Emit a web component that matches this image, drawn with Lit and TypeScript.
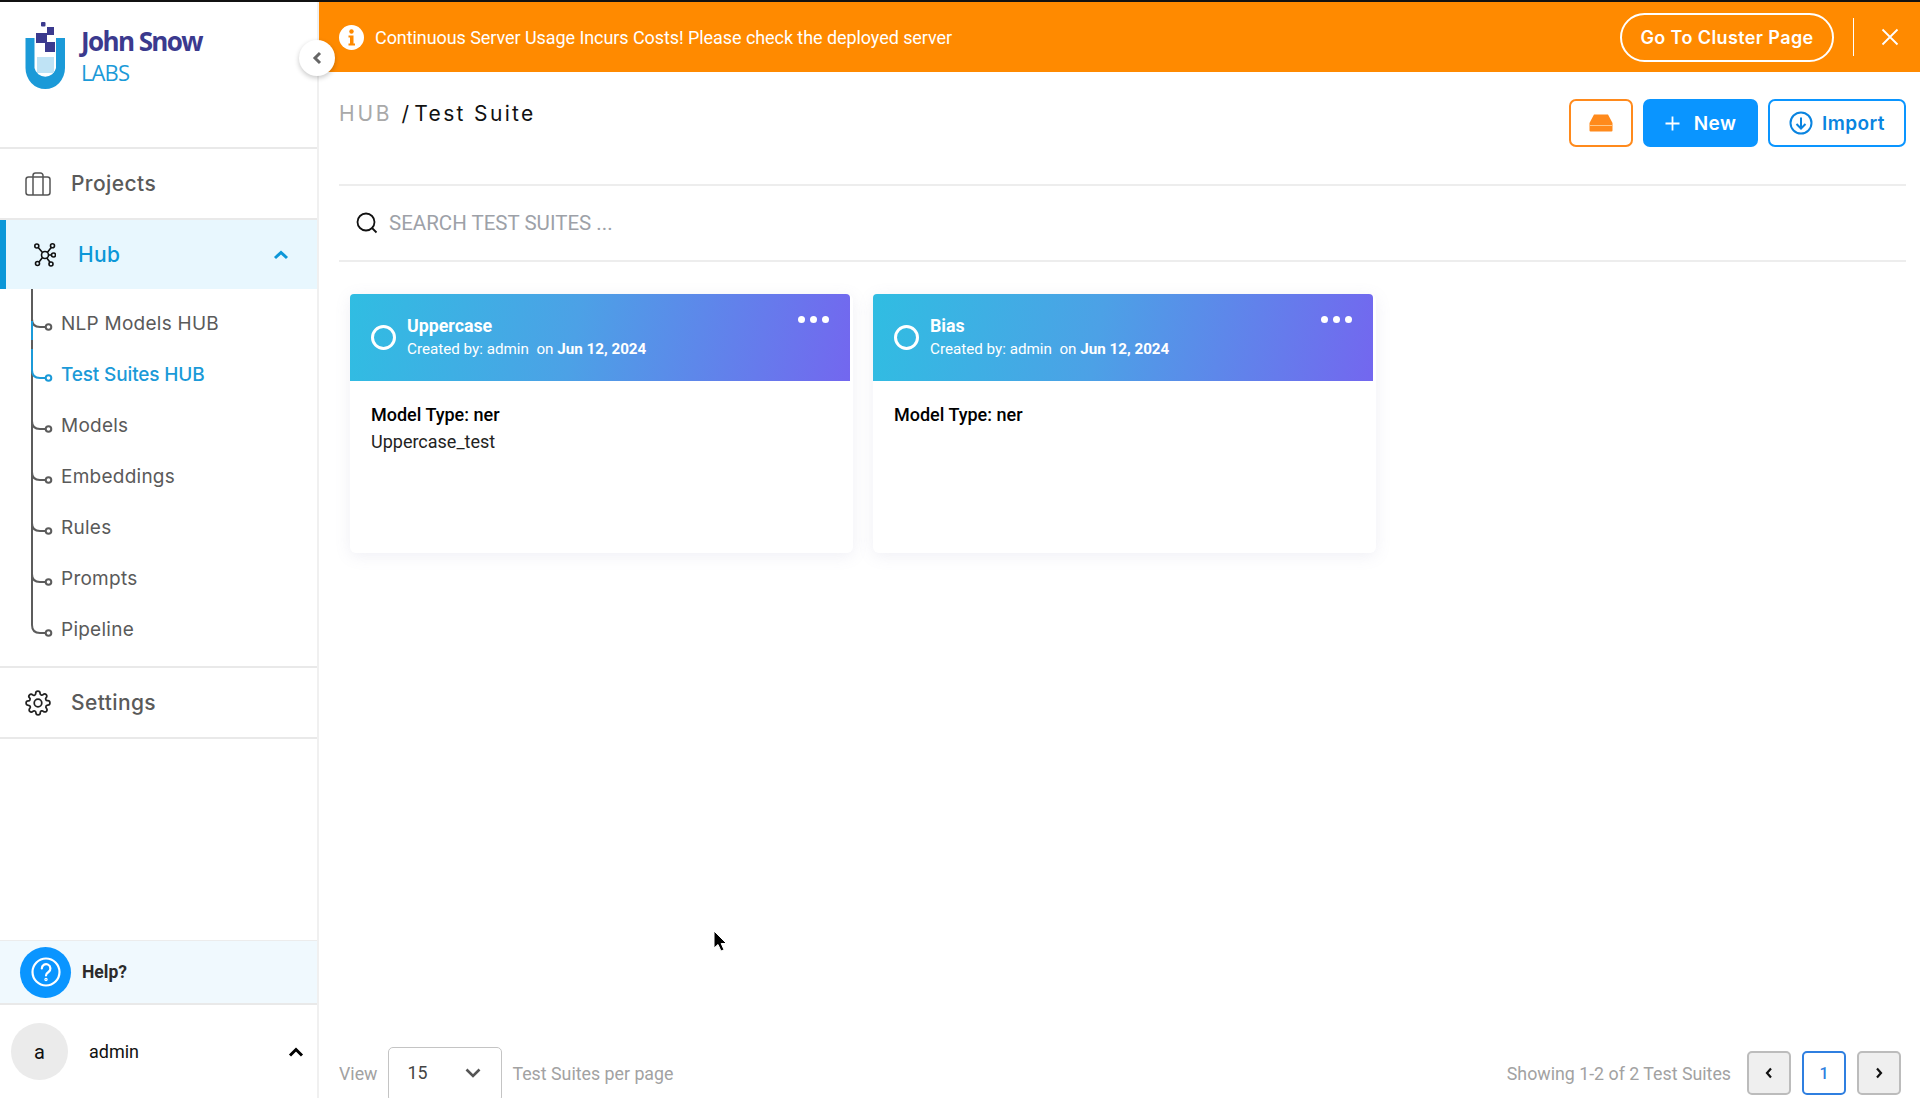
import { LitElement, html, css, svg } from 'lit';
import { customElement } from 'lit/decorators.js';

const SUB_ITEMS = ['NLP Models HUB', 'Test Suites HUB', 'Models', 'Embeddings', 'Rules', 'Prompts', 'Pipeline'];
const ACTIVE_SUB = 1;

const CARDS = [
  { title: 'Uppercase', note: 'Uppercase_test' },
  { title: 'Bias', note: '' },
];

// One row of the tree beside the submenu: trunk, curved branch and end dot.
function treeRow(index: number) {
  const last = index === SUB_ITEMS.length - 1;
  const active = index === ACTIVE_SUB;
  const grey = '#5c5c5c';
  const blue = '#1b9ad8';
  const stroke = active ? blue : grey;
  return html`<svg class="tree" width="61" height="51" viewBox="0 0 61 51" fill="none">
    ${last
      ? svg`<path d="M32 0V21Q32 29 40 29H45" stroke=${grey} stroke-width="2"/>`
      : svg`<path d="M32 -9V51" stroke=${grey} stroke-width="2"/>
            <path d="M32 21Q32 29 40 29H45" stroke=${stroke} stroke-width="2"/>`}
    ${index === ACTIVE_SUB - 1 ? svg`<path d="M32 23V51" stroke=${blue} stroke-width="2"/>` : ''}
    ${active ? svg`<path d="M32 0V21" stroke=${blue} stroke-width="2"/>` : ''}
    <circle cx="48.5" cy="29" r="2.8" stroke=${stroke} stroke-width="2"/>
  </svg>`;
}

@customElement('app-root')
export class AppRoot extends LitElement {
  static styles = css`
    :host {
      display: block;
      height: 1098px;
      overflow: hidden;
      font-family: Roboto, sans-serif;
      background: #fff;
    }
    .page {
      position: relative;
      display: flex;
      height: 1096px;
      border-top: 2px solid #111;
    }

    /* sidebar */
    .side {
      position: relative;
      flex: none;
      display: flex;
      flex-direction: column;
      width: 317px;
      border-right: 2px solid #f0f0f0;
      font-family: Inter, sans-serif;
    }
    .logo {
      display: flex;
      height: 145px;
      border-bottom: 2px solid #e9e9e9;
    }
    .logo svg { flex: none; }
    .logo-text { padding: 22px 0 0 15px; font-family: 'Open Sans', sans-serif; }
    .logo-name {
      font-size: 26px;
      line-height: 34px;
      font-weight: 700;
      letter-spacing: -1.6px;
      color: #3b3a8e;
    }
    .logo-labs {
      font-size: 22px;
      line-height: 28px;
      font-weight: 400;
      letter-spacing: -0.9px;
      color: #1b9ad8;
    }
    .toggle {
      position: absolute;
      top: 38px;
      left: 299px;
      z-index: 2;
      display: flex;
      align-items: center;
      justify-content: center;
      width: 36px;
      height: 36px;
      border-radius: 50%;
      background: #fff;
      box-shadow: 0 2px 5px rgba(0, 0, 0, 0.22);
    }
    .nav {
      display: flex;
      align-items: center;
      height: 69px;
      border-bottom: 2px solid #e9e9e9;
      font-size: 21px;
      font-weight: 500;
      letter-spacing: 0.4px;
      color: #5a5a5a;
    }
    .nav svg { flex: none; margin-left: 25px; }
    .nav span { margin-left: 20px; }
    .nav.hub {
      height: 69px;
      border-bottom: 0;
      border-left: 6px solid #0c97d8;
      background: #e8f7fe;
      color: #0c97d8;
    }
    .nav.hub svg.net { margin-left: 28px; }
    .nav.hub span { margin-left: 22px; }
    .nav.hub svg.chev { margin-left: auto; margin-right: 28px; }
    .sub { display: flex; flex-direction: column; padding: 9px 0 11px; border-bottom: 2px solid #e9e9e9; }
    .sub-item {
      display: flex;
      align-items: center;
      height: 51px;
      font-size: 19px;
      font-weight: 400;
      letter-spacing: 0.25px;
      color: #5a5a5a;
    }
    .sub-item.on { color: #1b9ad8; font-weight: 500; letter-spacing: -0.15px; }
    .tree { flex: none; overflow: visible; }
    .help {
      display: flex;
      align-items: center;
      height: 62px;
      margin-top: auto;
      border-top: 1px solid #ececec;
      border-bottom: 2px solid #e9e9e9;
      background: #f0f9fe;
      font-family: Roboto, sans-serif;
      font-size: 17.5px;
      font-weight: 700;
      color: #2b2b2b;
    }
    .help-icon {
      display: flex;
      align-items: center;
      justify-content: center;
      width: 51px;
      height: 51px;
      margin: 0 11px 0 20px;
      border-radius: 50%;
      background: #0a95ff;
    }
    .user {
      display: flex;
      align-items: center;
      height: 93px;
      padding: 0 13px 0 11px;
      font-family: Roboto, sans-serif;
      font-size: 18px;
      color: #111;
    }
    .avatar {
      display: flex;
      align-items: center;
      justify-content: center;
      width: 57px;
      height: 57px;
      margin-right: 21px;
      border-radius: 50%;
      background: #ebebeb;
      font-size: 20px;
    }
    .user svg { margin-left: auto; }

    /* main column */
    .main { flex: 1; min-width: 0; display: flex; flex-direction: column; }
    .banner {
      flex: none;
      display: flex;
      align-items: center;
      height: 70px;
      padding: 0 21px 0 20px;
      background: #ff8a00;
      color: #fff;
      font-size: 18px;
      letter-spacing: -0.07px;
    }
    .banner-text { margin-left: 11px; }
    .cluster {
      display: flex;
      align-items: center;
      justify-content: center;
      width: 214px;
      height: 49px;
      margin-left: auto;
      box-sizing: border-box;
      border: 2px solid #fff;
      border-radius: 25px;
      font-family: Inter, sans-serif;
      font-size: 18px;
      font-weight: 600;
      letter-spacing: 0.4px;
    }
    .divider { width: 1px; height: 38px; margin: 0 27px 0 19px; background: #fff; }
    .content { flex: 1; min-height: 0; display: flex; flex-direction: column; padding: 0 14px 0 20px; }
    .top {
      flex: none;
      display: flex;
      justify-content: space-between;
      height: 114px;
      border-bottom: 2px solid #ededed;
      box-sizing: border-box;
    }
    .crumb {
      padding-top: 28px;
      font-family: Inter, sans-serif;
      font-size: 21px;
      line-height: 28px;
      letter-spacing: 2.35px;
      color: #111;
    }
    .crumb b { font-weight: 400; color: #a9a9a9; margin-right: 9px; letter-spacing: 2.8px; }
    .crumb span { margin-left: 3px; }
    .actions { display: flex; gap: 10px; padding-top: 27px; }
    .btn {
      display: flex;
      align-items: center;
      justify-content: center;
      height: 48px;
      box-sizing: border-box;
      border: 2px solid #0a95ff;
      border-radius: 7px;
      font-family: Inter, sans-serif;
      font-size: 19px;
      font-weight: 600;
      letter-spacing: 0.4px;
      color: #0a84e0;
    }
    .btn.box { width: 64px; border-color: #ff8a1c; }
    .btn.new { width: 115px; gap: 14px; background: #0a95ff; color: #fff; }
    .btn.import { width: 138px; gap: 9px; }
    .search {
      flex: none;
      display: flex;
      align-items: center;
      gap: 11px;
      height: 76px;
      padding-left: 17px;
      border-bottom: 2px solid #ededed;
      box-sizing: border-box;
      font-size: 20.5px;
      color: #9da1a8;
    }
    .cards { flex: 1; min-height: 0; display: flex; gap: 20px; padding: 32px 0 0 11px; }
    .card {
      width: 503px;
      height: 259px;
      padding-right: 3px;
      box-sizing: border-box;
      border-radius: 6px;
      background: #fff;
      box-shadow: 0 3px 16px rgba(120, 125, 170, 0.12);
    }
    .card-head {
      position: relative;
      display: flex;
      align-items: center;
      height: 87px;
      border-radius: 4px 4px 0 0;
      background: linear-gradient(100deg, #30bde2, #4ca1e6 45%, #7367ef);
      color: #fff;
    }
    .radio {
      flex: none;
      width: 25px;
      height: 25px;
      margin: 0 11px 0 21px;
      box-sizing: border-box;
      border: 3px solid #fff;
      border-radius: 50%;
    }
    .card-text { padding-top: 1px; }
    .card-title { font-size: 17.8px; line-height: 22px; font-weight: 700; }
    .card-meta { font-size: 15.2px; line-height: 24px; white-space: pre; }
    .card-meta b { font-weight: 700; }
    .dots { position: absolute; top: 22px; right: 21px; display: flex; gap: 5px; }
    .dots i { width: 7px; height: 7px; border-radius: 50%; background: #fff; }
    .card-body { padding: 20px 0 0 21px; font-size: 18px; line-height: 27px; color: #222; }
    .card-body b { display: block; font-weight: 500; color: #000; }
    .pager {
      flex: none;
      display: flex;
      align-items: center;
      height: 50px;
      padding-top: 1px;
      font-size: 17.8px;
      color: #a2a2a2;
      overflow: hidden;
    }
    .select {
      display: flex;
      align-items: center;
      justify-content: space-between;
      align-self: flex-start;
      width: 114px;
      height: 55px;
      margin: -1px 10px 0 11px;
      padding: 0 20px 4px 18px;
      box-sizing: border-box;
      border: 1px solid #c4c4c4;
      border-radius: 5px;
      color: #444;
    }
    .showing { margin-left: auto; margin-right: 16px; }
    .page-btn {
      display: flex;
      align-items: center;
      justify-content: center;
      width: 44px;
      height: 44px;
      margin-left: 11px;
      box-sizing: border-box;
      border: 2px solid #bcbcbc;
      border-radius: 5px;
      background: #efefef;
      color: #111;
    }
    .page-btn.first { margin-left: 0; }
    .page-btn.on {
      border-color: #2f7fe0;
      background: #fff;
      color: #2f7fe0;
      font-size: 16px;
      font-weight: 500;
    }
    .page-btn.last { margin-right: 5px; }
    .cursor { position: absolute; left: 713px; top: 928px; z-index: 5; }
  `;

  render() {
    return html`
      <div class="page">
        <aside class="side">
          <div class="logo">
            <svg width="66" height="96" viewBox="0 0 66 96">
              <path d="M25.5 36H34.5V66A11 11 0 0 0 56 66V36H65V66A19.7 21 0 0 1 25.5 66Z" fill="#1b9ad8"/>
              <rect x="37" y="55" width="17" height="16" fill="#bfe3f5"/>
              <rect x="41" y="20" width="4.500" height="4.500" rx="1" fill="#3b3a8e"/>
              <path d="M47 25H54V33H47ZM36 31H47V41H36ZM45 40H55V50H45Z" fill="#3b3a8e"/>
            </svg>
            <div class="logo-text">
              <div class="logo-name">John Snow</div>
              <div class="logo-labs">LABS</div>
            </div>
          </div>
          <div class="toggle">
            <svg width="10" height="14" viewBox="0 0 10 14" fill="none"><path d="M8 2L3 7L8 12" stroke="#666" stroke-width="3"/></svg>
          </div>
          <div class="nav">
            <svg width="26" height="24" viewBox="0 0 26 24" fill="none" stroke="#555" stroke-width="1.500">
              <rect x="1" y="5" width="24" height="18" rx="2.500"/>
              <path d="M8 23V3.500A2.500 2.500 0 0 1 10.500 1H15.500A2.500 2.500 0 0 1 18 3.500V23"/>
            </svg>
            <span>Projects</span>
          </div>
          <div class="nav hub">
            <svg class="net" width="22" height="24" viewBox="0 0 22 24" fill="none" stroke="#111" stroke-width="1.600">
              <circle cx="11" cy="12" r="3.500"/>
              <circle cx="2.800" cy="3" r="2"/><circle cx="18.500" cy="2.800" r="2"/>
              <circle cx="19.500" cy="12" r="2"/><circle cx="17" cy="21" r="2"/><circle cx="3.500" cy="20.500" r="2"/>
              <path d="M4.200 4.500L8.500 9.500M17.200 4.500L13.300 9.500M14.500 12H17.500M12.800 15L16 19.300M8.500 14.500L5 19"/>
            </svg>
            <span>Hub</span>
            <svg class="chev" width="16" height="10" viewBox="0 0 16 10" fill="none"><path d="M2 8L8 2.500L14 8" stroke="#0c97d8" stroke-width="3"/></svg>
          </div>
          <div class="sub">
            ${SUB_ITEMS.map((name, i) => html`
              <div class="sub-item ${i === ACTIVE_SUB ? 'on' : ''}">${treeRow(i)}<span>${name}</span></div>
            `)}
          </div>
          <div class="nav">
            <svg width="26" height="26" viewBox="0 0 24 24" fill="none" stroke="#222" stroke-width="1.600" stroke-linejoin="round">
              <circle cx="12" cy="12" r="3.500"/>
              <path d="M19.400 15a1.650 1.650 0 0 0 .33 1.820l.06.06a2 2 0 1 1-2.830 2.830l-.06-.06a1.650 1.650 0 0 0-2.800 1.170V21a2 2 0 1 1-4 0v-.09a1.650 1.650 0 0 0-2.800-1.170l-.06.06a2 2 0 1 1-2.830-2.830l.06-.06a1.650 1.650 0 0 0-1.170-2.800H3a2 2 0 1 1 0-4h.09a1.650 1.650 0 0 0 1.170-2.800l-.06-.06a2 2 0 1 1 2.830-2.830l.06.06a1.650 1.650 0 0 0 2.800-1.170V3a2 2 0 1 1 4 0v.09a1.650 1.650 0 0 0 2.800 1.170l.06-.06a2 2 0 1 1 2.830 2.830l-.06.06a1.650 1.650 0 0 0 1.170 2.800H21a2 2 0 1 1 0 4h-.09a1.650 1.650 0 0 0-1.510 1z"/>
            </svg>
            <span>Settings</span>
          </div>
          <div class="help">
            <div class="help-icon">
              <svg width="34" height="34" viewBox="0 0 34 34" fill="none" stroke="#fff" stroke-width="2.200">
                <circle cx="17" cy="17" r="13.500"/>
                <path d="M12.800 13.500A4.300 4.300 0 1 1 19.500 17C18 18 17 18.800 17 20.500" stroke-linecap="round"/>
                <circle cx="17" cy="24.500" r="0.600"/>
              </svg>
            </div>
            Help?
          </div>
          <div class="user">
            <div class="avatar">a</div>
            admin
            <svg width="16" height="10" viewBox="0 0 16 10" fill="none"><path d="M2 8.500L8 2.500L14 8.500" stroke="#000" stroke-width="3"/></svg>
          </div>
        </aside>

        <main class="main">
          <div class="banner">
            <svg width="25" height="25" viewBox="0 0 25 25">
              <circle cx="12.500" cy="12.500" r="12.500" fill="#fff"/>
              <circle cx="12.500" cy="6.500" r="2.200" fill="#ff8a00"/>
              <path d="M9.500 10.500H14.500V18.500H16V20.500H9.500V18.500H11V12.500H9.500Z" fill="#ff8a00"/>
            </svg>
            <span class="banner-text">Continuous Server Usage Incurs Costs! Please check the deployed server</span>
            <div class="cluster">Go To Cluster Page</div>
            <div class="divider"></div>
            <svg width="18" height="18" viewBox="0 0 18 18" fill="none"><path d="M1.500 1.500L16.500 16.500M16.500 1.500L1.500 16.500" stroke="#fff" stroke-width="1.800"/></svg>
          </div>
          <div class="content">
            <div class="top">
              <div class="crumb"><b>HUB</b>/<span>Test Suite</span></div>
              <div class="actions">
                <div class="btn box">
                  <svg width="24" height="18" viewBox="0 0 24 18">
                    <path d="M5 0.500H19L23.500 9V16.500A1 1 0 0 1 22.500 17.500H1.500A1 1 0 0 1 0.500 16.500V9Z" fill="#ff8a1c"/>
                    <path d="M0.500 11.500H23.500" stroke="#ffc98a" stroke-width="1"/>
                  </svg>
                </div>
                <div class="btn new">
                  <svg width="15" height="15" viewBox="0 0 15 15"><path d="M7.500 0.500V14.500M0.500 7.500H14.500" stroke="#fff" stroke-width="1.800"/></svg>
                  New
                </div>
                <div class="btn import">
                  <svg width="24" height="24" viewBox="0 0 24 24" fill="none" stroke="#0a84e0" stroke-width="2">
                    <circle cx="12" cy="12" r="10.500"/>
                    <path d="M12 6.500V17M7.500 13L12 17.500L16.500 13"/>
                  </svg>
                  Import
                </div>
              </div>
            </div>
            <div class="search">
              <svg width="22" height="22" viewBox="0 0 22 22" fill="none" stroke="#111" stroke-width="1.800">
                <circle cx="10" cy="10" r="8.500"/>
                <path d="M16 16L20.500 20.500"/>
              </svg>
              SEARCH TEST SUITES ...
            </div>
            <div class="cards">
              ${CARDS.map((c) => html`
                <div class="card">
                  <div class="card-head">
                    <div class="radio"></div>
                    <div class="card-text">
                      <div class="card-title">${c.title}</div>
                      <div class="card-meta">Created by: admin  on <b>Jun 12, 2024</b></div>
                    </div>
                    <div class="dots"><i></i><i></i><i></i></div>
                  </div>
                  <div class="card-body">
                    <b>Model Type: ner</b>
                    ${c.note}
                  </div>
                </div>
              `)}
            </div>
            <div class="pager">
              <span>View</span>
              <div class="select">
                15
                <svg width="16" height="10" viewBox="0 0 16 10" fill="none"><path d="M1.500 1.500L8 8L14.500 1.500" stroke="#555" stroke-width="2.600"/></svg>
              </div>
              <span>Test Suites per page</span>
              <span class="showing">Showing 1-2 of 2 Test Suites</span>
              <div class="page-btn first">
                <svg width="8" height="12" viewBox="0 0 8 12" fill="none"><path d="M6 1.500L2 6L6 10.500" stroke="#111" stroke-width="2.200"/></svg>
              </div>
              <div class="page-btn on">1</div>
              <div class="page-btn last">
                <svg width="8" height="12" viewBox="0 0 8 12" fill="none"><path d="M2 1.500L6 6L2 10.500" stroke="#111" stroke-width="2.200"/></svg>
              </div>
            </div>
          </div>
        </main>
        <svg class="cursor" width="16" height="24" viewBox="0 0 16 24">
          <path d="M1 1V18L5 14.500L8 21L11 19.800L8.200 13.500H13.500Z" fill="#000" stroke="#fff" stroke-width="1"/>
        </svg>
      </div>
    `;
  }
}
